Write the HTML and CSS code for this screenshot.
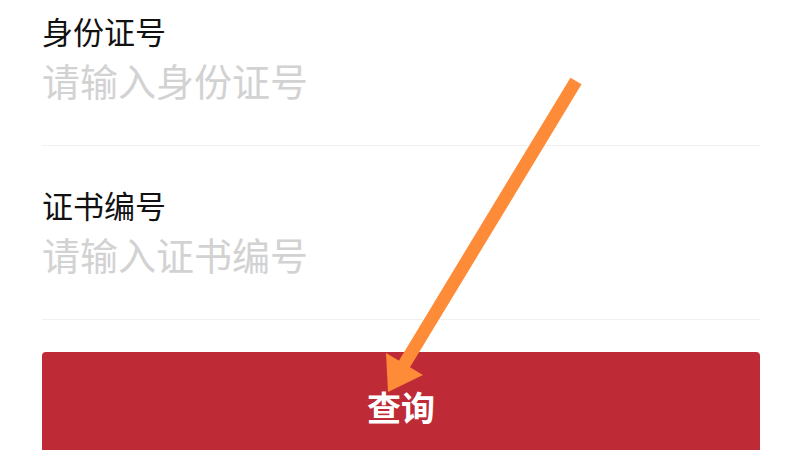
FILE: index.html
```html
<!DOCTYPE html>
<html lang="zh-CN">
<head>
<meta charset="utf-8">
<title>证书查询</title>
<link rel="stylesheet" href="styles.css">
</head>
<body>
<main class="page">
  <div class="form">
    <div class="field">
      <div class="label">身份证号</div>
      <div class="placeholder">请输入身份证号</div>
    </div>
    <div class="field">
      <div class="label">证书编号</div>
      <div class="placeholder">请输入证书编号</div>
    </div>
    <button class="submit">查询</button>
  </div>
  <svg class="arrow" width="800" height="450" viewBox="0 0 800 450">
    <line x1="576" y1="81" x2="402" y2="368" stroke="#fe8b37" stroke-width="13"/>
    <polygon points="386,353 423,375 388,392" fill="#fe8b37"/>
  </svg>
</main>
</body>
</html>
```
FILE: styles.css
```css
html, body {
  margin: 0;
  padding: 0;
  background: #ffffff;
}
.page {
  position: relative;
  width: 800px;
  height: 450px;
  overflow: hidden;
  font-family: "Noto Sans CJK SC", "Noto Sans", sans-serif;
}
.form {
  margin-top: -28px;
  padding: 0 40px 0 42px;
  display: flex;
  flex-direction: column;
}
.field {
  padding: 39px 0 36px 0;
  border-bottom: 1px solid #f0f0f0;
  display: flex;
  flex-direction: column;
}
.label {
  font-size: 31px;
  line-height: 40px;
  color: #111111;
}
.placeholder {
  font-size: 38px;
  line-height: 58px;
  color: #d2d2d2;
}
.submit {
  margin-top: 32px;
  height: 110px;
  border: none;
  border-radius: 4px;
  background: #be2a36;
  color: #ffffff;
  font-family: "Noto Sans CJK SC", sans-serif;
  font-size: 34px;
  font-weight: 700;
  line-height: 108px;
  padding: 0;
  text-align: center;
}
.arrow {
  position: absolute;
  left: 0;
  top: 0;
  pointer-events: none;
}
```
